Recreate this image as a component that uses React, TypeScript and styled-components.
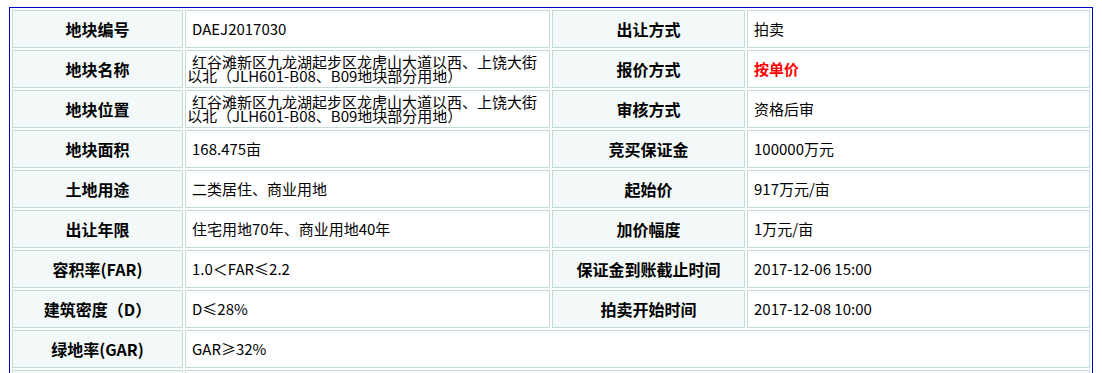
import React from "react";
import styled, { createGlobalStyle } from "styled-components";

const GlobalStyle = createGlobalStyle`
  html, body { margin: 0; padding: 0; background: #ffffff; }
  body { font-family: "Noto Sans CJK SC", "Liberation Sans", sans-serif; }
`;

const Page = styled.div`
  padding: 7px 0 0 9px;
`;

const Table = styled.table`
  width: 1083px;
  table-layout: fixed;
  border-collapse: separate;
  border-spacing: 2px;
  border: 1px solid #0000cc;
  border-bottom: none;
`;

const Col = styled.col<{ $w: number }>`
  width: ${(p) => p.$w}px;
`;

const Label = styled.th`
  box-sizing: border-box;
  height: 38px;
  border: 1px solid #c3dcd8;
  background: #f3f9f9;
  font-family: "Noto Sans CJK SC", sans-serif;
  font-size: 16px;
  font-weight: bold;
  color: #000;
  text-align: center;
  vertical-align: middle;
  padding: 0;
`;

const Value = styled.td<{ $red?: boolean }>`
  box-sizing: border-box;
  height: 38px;
  border: 1px solid #c3dcd8;
  background: #ffffff;
  font-family: "Noto Sans CJK SC", sans-serif;
  font-size: 15px;
  font-weight: ${(p) => (p.$red ? "bold" : "normal")};
  color: ${(p) => (p.$red ? "#ff0000" : "#000")};
  line-height: 14px;
  text-align: left;
  vertical-align: middle;
  padding: 0 0 0 1px;
  text-indent: 5px;
`;

type Row = { l1: string; v1: string; l2?: string; v2?: string; red?: boolean };

const rows: Row[] = [
  { l1: "地块编号", v1: "DAEJ2017030", l2: "出让方式", v2: "拍卖" },
  {
    l1: "地块名称",
    v1: "红谷滩新区九龙湖起步区龙虎山大道以西、上饶大街以北（JLH601-B08、B09地块部分用地）",
    l2: "报价方式",
    v2: "按单价",
    red: true,
  },
  {
    l1: "地块位置",
    v1: "红谷滩新区九龙湖起步区龙虎山大道以西、上饶大街以北（JLH601-B08、B09地块部分用地）",
    l2: "审核方式",
    v2: "资格后审",
  },
  { l1: "地块面积", v1: "168.475亩", l2: "竞买保证金", v2: "100000万元" },
  { l1: "土地用途", v1: "二类居住、商业用地", l2: "起始价", v2: "917万元/亩" },
  { l1: "出让年限", v1: "住宅用地70年、商业用地40年", l2: "加价幅度", v2: "1万元/亩" },
  { l1: "容积率(FAR)", v1: "1.0＜FAR≤2.2", l2: "保证金到账截止时间", v2: "2017-12-06 15:00" },
  { l1: "建筑密度（D）", v1: "D≤28%", l2: "拍卖开始时间", v2: "2017-12-08 10:00" },
  { l1: "绿地率(GAR)", v1: "GAR≥32%" },
  { l1: "", v1: "" },
];

export default function App() {
  return (
    <Page>
      <GlobalStyle />
      <Table>
        <colgroup>
          <Col $w={171} />
          <Col $w={365} />
          <Col $w={193} />
          <Col $w={343} />
        </colgroup>
        <tbody>
          {rows.map((r, i) => (
            <tr key={i}>
              <Label>{r.l1}</Label>
              {r.l2 !== undefined ? (
                <>
                  <Value>{r.v1}</Value>
                  <Label>{r.l2}</Label>
                  <Value $red={r.red}>{r.v2}</Value>
                </>
              ) : (
                <Value colSpan={3}>{r.v1}</Value>
              )}
            </tr>
          ))}
        </tbody>
      </Table>
    </Page>
  );
}
